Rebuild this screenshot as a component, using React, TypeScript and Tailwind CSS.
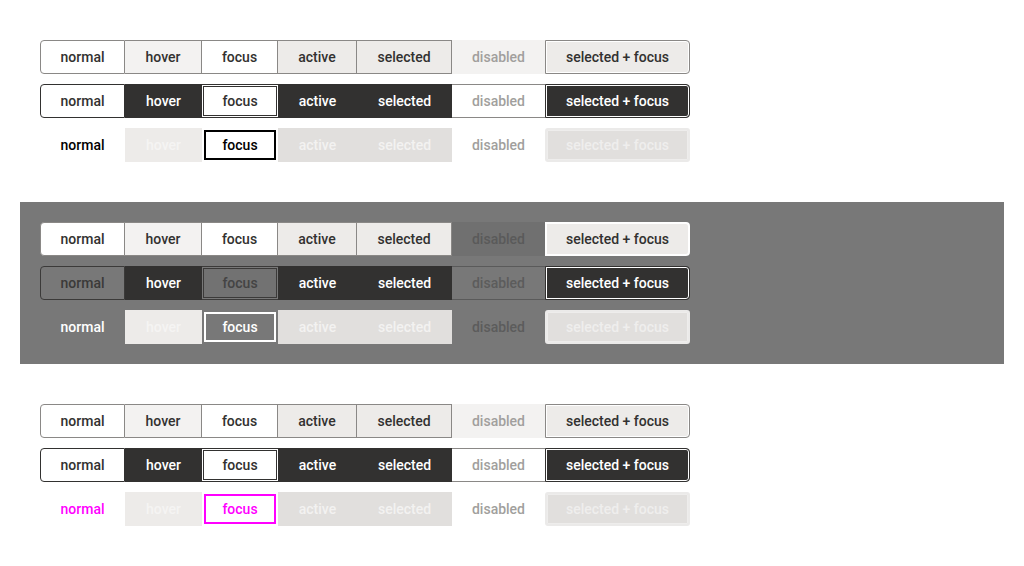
import React from "react";

type Cell = { label: string; cls: string };

const widths = ["w-[85px]", "w-[77px]", "w-[76px]", "w-[79px]", "w-[95px]", "w-[93px]", "w-[145px]"];
const labels = ["normal", "hover", "focus", "active", "selected", "disabled", "selected + focus"];

const B = "border-[#8a8886]";

const lightRow1 = [
  `bg-white border ${B} rounded-l-[4px] text-[#323130]`,
  `bg-[#f3f2f1] border-y border-r ${B} text-[#323130]`,
  `bg-white border-y border-r ${B} text-[#323130]`,
  `bg-[#edebe9] border-y border-r ${B} text-[#323130]`,
  `bg-[#edebe9] border-y border-r ${B} text-[#323130]`,
  "bg-[#f3f2f1] text-[#a19f9d]",
  `bg-[#edebe9] border ${B} rounded-r-[4px] shadow-[inset_0_0_0_1px_#ffffff] text-[#323130]`,
];

const lightRow2 = [
  "bg-white border border-[#323130] rounded-l-[4px] text-[#323130]",
  "bg-[#323130] text-white",
  "bg-white border-y border-[#323130] shadow-[inset_0_0_0_1px_#ffffff,inset_0_0_0_2px_#323130] text-[#323130]",
  "bg-[#323130] text-white",
  "bg-[#323130] text-white",
  `bg-white border-y ${B} text-[#a19f9d]`,
  "bg-[#323130] border border-[#323130] rounded-r-[4px] shadow-[inset_0_0_0_1px_#ffffff] text-white",
];

const lightRow3 = (accent: string, ring: string) => [
  accent,
  "bg-[#edebe9] text-[#f5f4f3]",
  `${accent} outline-2 ${ring} -outline-offset-4`,
  "bg-[#e1dfdd] text-[#f3f2f1]",
  "bg-[#e1dfdd] text-[#f3f2f1]",
  "text-[#a19f9d]",
  "bg-[#e1dfdd] border-2 border-[#ebeae9] rounded-[3px] shadow-[inset_0_0_0_1px_#eeedec] text-[#efeeed]",
];

const darkRow1 = [
  `bg-white border ${B} rounded-l-[4px] text-[#323130]`,
  `bg-[#f3f2f1] border-y border-r ${B} text-[#323130]`,
  `bg-white border-y border-r ${B} text-[#323130]`,
  `bg-[#edebe9] border-y border-r ${B} text-[#323130]`,
  `bg-[#edebe9] border-y border-r ${B} text-[#323130]`,
  "bg-[#707070] text-[#5a5a5a]",
  "bg-[#edebe9] border-2 border-white rounded-r-[4px] text-[#323130]",
];

const darkRow2 = [
  "border border-[#3b3a39] rounded-l-[4px] text-[#3b3a39]",
  "bg-[#323130] text-white",
  "bg-[#727272] border-y border-[#3b3a39] shadow-[inset_0_0_0_1px_#787878,inset_0_0_0_2px_#3b3a39] text-[#444444]",
  "bg-[#323130] text-white",
  "bg-[#323130] text-white",
  "border-y border-[#5a5a5a] text-[#5c5c5c]",
  "bg-[#323130] border border-[#323130] rounded-r-[4px] shadow-[inset_0_0_0_1px_#ffffff] text-white",
];

const darkRow3 = [
  "text-white",
  "bg-[#edebe9] text-[#f5f4f3]",
  "text-white outline-2 outline-white -outline-offset-4",
  "bg-[#e1dfdd] text-[#f3f2f1]",
  "bg-[#e1dfdd] text-[#f3f2f1]",
  "text-[#5c5c5c]",
  "bg-[#e1dfdd] border-2 border-[#ebeae9] rounded-[3px] shadow-[inset_0_0_0_1px_#eeedec] text-[#efeeed]",
];

function Row({ styles }: { styles: string[] }) {
  const cells: Cell[] = labels.map((label, i) => ({ label, cls: styles[i] }));
  return (
    <div className="flex">
      {cells.map((c, i) => (
        <div
          key={c.label}
          className={`${widths[i]} h-[34px] shrink-0 flex items-center justify-center text-[14px] font-medium ${c.cls}`}
        >
          {c.label}
        </div>
      ))}
    </div>
  );
}

function Group({ rows }: { rows: string[][] }) {
  return (
    <div className="flex flex-col gap-[10px]">
      {rows.map((r, i) => (
        <Row key={i} styles={r} />
      ))}
    </div>
  );
}

export default function App() {
  return (
    <div className="w-[1024px] h-[566px] bg-white pt-10 font-['Roboto',sans-serif] flex flex-col gap-10">
      <div className="px-10">
        <Group rows={[lightRow1, lightRow2, lightRow3("text-black", "outline-black")]} />
      </div>
      <div className="mx-5 px-5 py-5 bg-[#787878]">
        <Group rows={[darkRow1, darkRow2, darkRow3]} />
      </div>
      <div className="px-10">
        <Group rows={[lightRow1, lightRow2, lightRow3("text-[#ff00ff]", "outline-[#ff00ff]")]} />
      </div>
    </div>
  );
}
